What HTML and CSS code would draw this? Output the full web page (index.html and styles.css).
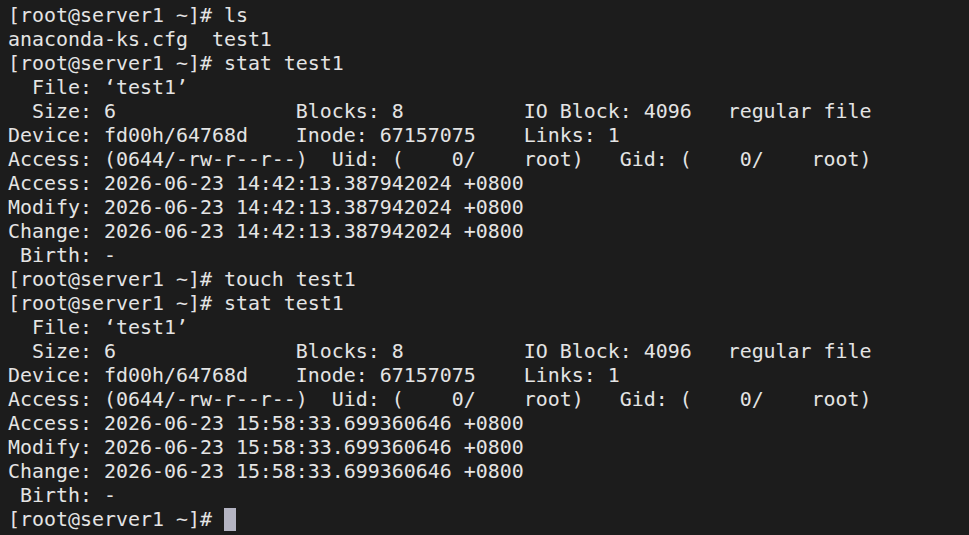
FILE: index.html
```html
<!DOCTYPE html>
<html>
<head>
<meta charset="utf-8">
<link rel="stylesheet" href="styles.css">
</head>
<body>
<pre class="term">[root@server1 ~]# ls
anaconda-ks.cfg  test1
[root@server1 ~]# stat test1
  File: ‘test1’
  Size: 6               Blocks: 8          IO Block: 4096   regular file
Device: fd00h/64768d    Inode: 67157075    Links: 1
Access: (0644/-rw-r--r--)  Uid: (    0/    root)   Gid: (    0/    root)
Access: 2026-06-23 14:42:13.387942024 +0800
Modify: 2026-06-23 14:42:13.387942024 +0800
Change: 2026-06-23 14:42:13.387942024 +0800
 Birth: -
[root@server1 ~]# touch test1
[root@server1 ~]# stat test1
  File: ‘test1’
  Size: 6               Blocks: 8          IO Block: 4096   regular file
Device: fd00h/64768d    Inode: 67157075    Links: 1
Access: (0644/-rw-r--r--)  Uid: (    0/    root)   Gid: (    0/    root)
Access: 2026-06-23 15:58:33.699360646 +0800
Modify: 2026-06-23 15:58:33.699360646 +0800
Change: 2026-06-23 15:58:33.699360646 +0800
 Birth: -
[root@server1 ~]# <span class="cursor"> </span></pre>
</body>
</html>
```
FILE: styles.css
```css
html, body {
  margin: 0;
  padding: 0;
  background: #1c1c1c;
  height: 100%;
  overflow: hidden;
}
.term {
  margin: 0;
  padding: 4px 8px;
  font-family: "DejaVu Sans Mono", "Liberation Mono", monospace;
  font-size: 19.93px;
  line-height: 24px;
  color: #e4e4e4;
  white-space: pre;
}
.cursor {
  display: inline-block;
  width: 12px;
  height: 23px;
  vertical-align: top;
  background: #b4b4c2;
}
```
